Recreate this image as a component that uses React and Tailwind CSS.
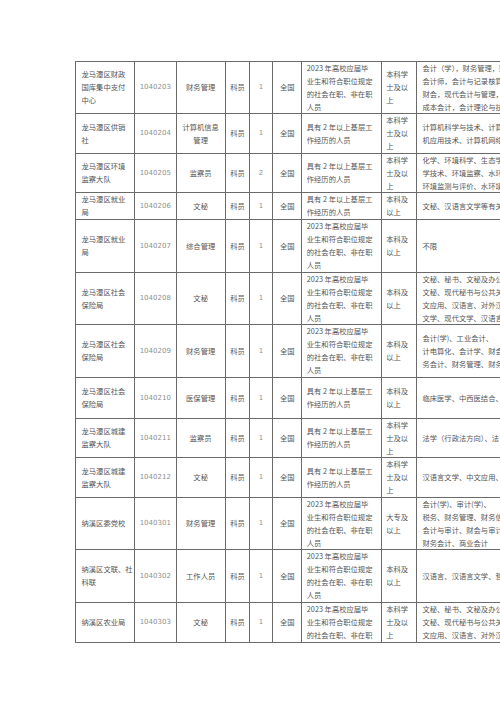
import React from "react";

const A = ["2023 年高校应届毕", "业生和符合职位规定", "的社会在职、非在职", "人员"];
const B = ["具有 2 年以上基层工", "作经历的人员"];
const D3 = ["本科学", "士及以", "上"];
const D2 = ["本科及", "以上"];

const rows = [
  { org: ["龙马潭区财政", "国库集中支付", "中心"], code: "1040203", job: ["财务管理"], n: "1", cond: A, deg: D3,
    major: ["会计（学），财务管理，财务", "会计师，会计与记录核算", "财会，现代会计与管理，", "成本会计，会计理论与技"] },
  { org: ["龙马潭区供销", "社"], code: "1040204", job: ["计算机信息", "管理"], n: "1", cond: B, deg: D3,
    major: ["计算机科学与技术、计算机", "机应用技术、计算机网络"] },
  { org: ["龙马潭区环境", "监察大队"], code: "1040205", job: ["监察员"], n: "2", cond: B, deg: D3,
    major: ["化学、环境科学、生态学", "学技术、环境监察、水环境", "环境监测与评价、水环境"] },
  { org: ["龙马潭区就业", "局"], code: "1040206", job: ["文秘"], n: "1", cond: B, deg: D2,
    major: ["文秘、汉语言文学等有关专业"] },
  { org: ["龙马潭区就业", "局"], code: "1040207", job: ["综合管理"], n: "1", cond: A, deg: D2,
    major: ["不限"] },
  { org: ["龙马潭区社会", "保险局"], code: "1040208", job: ["文秘"], n: "1", cond: A, deg: D2,
    major: ["文秘、秘书、文秘及办公", "文秘、现代秘书与公共关系", "文应用、汉语言、对外汉语", "文学、现代文学、汉语言"] },
  { org: ["龙马潭区社会", "保险局"], code: "1040209", job: ["财务管理"], n: "1", cond: A, deg: D2,
    major: ["会计(学)、工业会计、", "计电算化、会计学、财会", "务会计、财务管理、财务"] },
  { org: ["龙马潭区社会", "保险局"], code: "1040210", job: ["医保管理"], n: "1", cond: B, deg: D2,
    major: ["临床医学、中西医结合、"] },
  { org: ["龙马潭区城建", "监察大队"], code: "1040211", job: ["监察员"], n: "1", cond: B, deg: D3,
    major: ["法学（行政法方向）、法"] },
  { org: ["龙马潭区城建", "监察大队"], code: "1040212", job: ["文秘"], n: "1", cond: B, deg: D3,
    major: ["汉语言文学、中文应用、"] },
  { org: ["纳溪区委党校"], code: "1040301", job: ["财务管理"], n: "1", cond: A, deg: ["大专及", "以上"],
    major: ["会计(学)、审计(学)、", "税务、财务管理、财务信", "会计与审计、财会与审计", "财务会计、商业会计"] },
  { org: ["纳溪区文联、社", "科联"], code: "1040302", job: ["工作人员"], n: "1", cond: A, deg: D2,
    major: ["汉语言、汉语言文学、哲"] },
  { org: ["纳溪区农业局"], code: "1040303", job: ["文秘"], n: "1", cond: A.slice(0, 3), deg: D3,
    major: ["文秘、秘书、文秘及办公", "文秘、现代秘书与公共关", "文应用、汉语言、对外汉"] },
];

function Lines({ lines }) {
  return lines.map((l, i) => (
    <div key={i} className="whitespace-nowrap leading-[13px]">{l}</div>
  ));
}

function Cell({ children, className = "" }) {
  return (
    <div className={"flex flex-col justify-center overflow-hidden border-r border-b border-[#6a6a6a] " + className}>
      {children}
    </div>
  );
}

const numCls = "items-center text-[7px] text-[#8f8f8f] font-['DejaVu_Sans','Noto_Sans_CJK_SC',sans-serif]";

export default function App() {
  return (
    <div className="w-[500px] h-[707px] overflow-hidden bg-white pt-[61px] pl-[75px]">
      <div className="grid w-[560px] border-t border-l border-[#6a6a6a] grid-cols-[59px_41.5px_49.3px_24.3px_23px_29.4px_79.3px_35.7px_218px] grid-rows-[52px_40px_39px_27px_53px_52px_53px_41px_39px_40px_52px_53px_40px] text-[7.3px] text-[#555555] font-['Noto_Sans_CJK_SC','DejaVu_Sans',sans-serif]">
        {rows.map((r, i) => (
          <React.Fragment key={i}>
            <Cell className="pl-[5.5px] items-start">
              <Lines lines={r.org} />
            </Cell>
            <Cell className={numCls}>
              <div className="leading-[13px]">{r.code}</div>
            </Cell>
            <Cell className="items-center text-center">
              <Lines lines={r.job} />
            </Cell>
            <Cell className="items-center">
              <div className="leading-[13px]">科员</div>
            </Cell>
            <Cell className={numCls}>
              <div className="leading-[13px]">{r.n}</div>
            </Cell>
            <Cell className="items-center">
              <div className="leading-[13px]">全国</div>
            </Cell>
            <Cell className="pl-[4.3px] items-start">
              <Lines lines={r.cond} />
            </Cell>
            <Cell className="pl-[4.5px] items-start">
              <Lines lines={r.deg} />
            </Cell>
            <Cell className="pl-[5px] items-start">
              <Lines lines={r.major} />
            </Cell>
          </React.Fragment>
        ))}
      </div>
    </div>
  );
}
